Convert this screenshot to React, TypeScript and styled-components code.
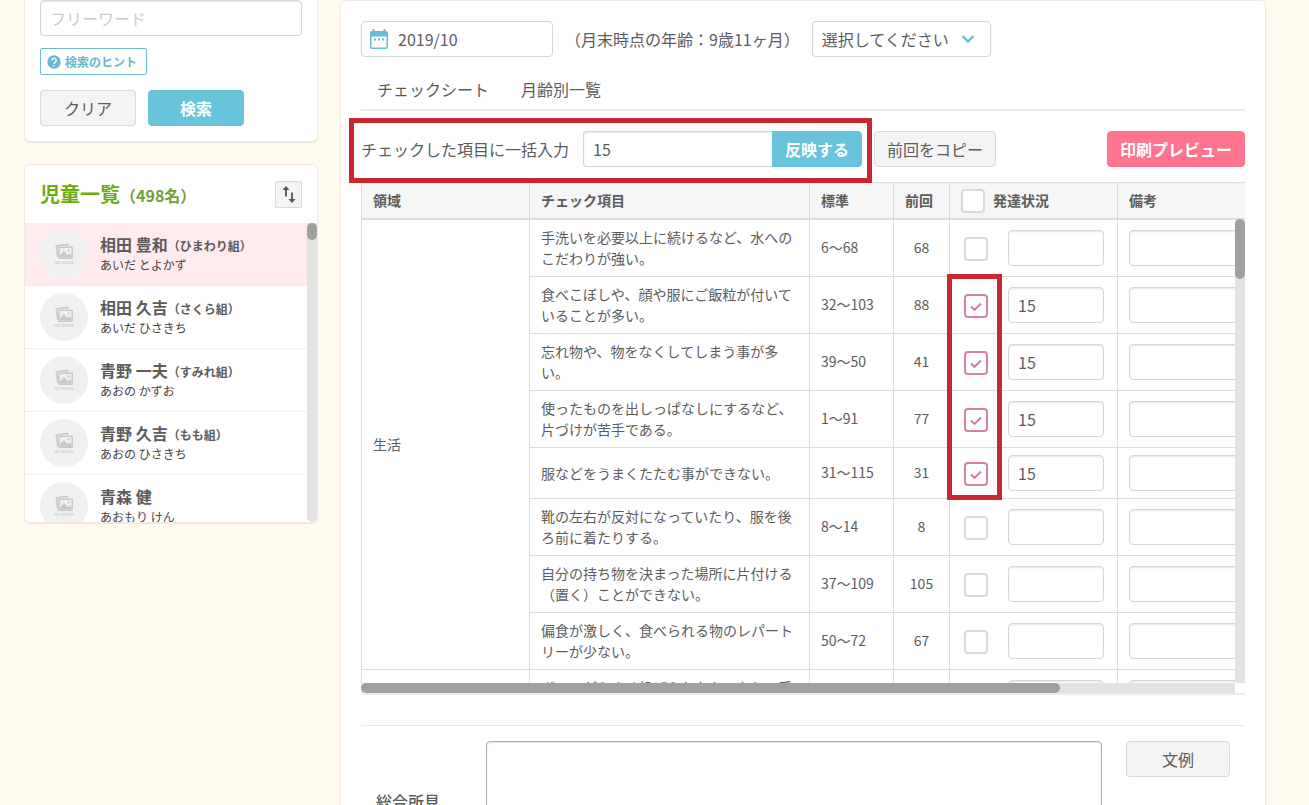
import React from 'react';
import styled, { createGlobalStyle, css } from 'styled-components';

const GlobalStyle = createGlobalStyle`
  *, *::before, *::after { box-sizing: border-box; }
  body {
    margin: 0;
    background: #fffbee;
    color: #5c5c5c;
    font: 400 16px/24px "Noto Sans CJK JP", "Noto Sans", sans-serif;
  }
  button, input, select, textarea { font: inherit; color: inherit; margin: 0; }
`;

const Page = styled.div`
  display: flex;
  align-items: flex-start;
  gap: 22px;
  height: 100vh;
  padding: 0 43px 0 24px;
  overflow: hidden;
`;

const Sidebar = styled.aside`
  flex: 0 0 294px;
  display: flex;
  flex-direction: column;
  gap: 22px;
`;

const cardBase = css`
  background: #fff;
  border: 1px solid #f1ebdf;
  border-radius: 6px;
  box-shadow: 0 1px 1px #ece6da;
`;

const SearchCard = styled.form`
  ${cardBase}
  display: flex;
  flex-direction: column;
  align-items: flex-start;
  gap: 12px;
  padding: 0 15px 15px;
  border-top: 0;
  border-radius: 0 0 6px 6px;
`;

const TextField = styled.input`
  display: block;
  width: 100%;
  min-width: 0;
  height: 36px;
  padding: 0 9px;
  border: 1px solid #d6d6d6;
  border-radius: 4px;
  background: #fff;
  box-shadow: inset 0 1px 2px rgba(0, 0, 0, 0.1);
  outline: none;
  &::placeholder { color: #cbcbcb; opacity: 1; }
`;

const HintButton = styled.button`
  display: flex;
  align-items: center;
  gap: 4px;
  height: 27px;
  padding: 0 9px 0 6px;
  border: 1px solid #6db9ce;
  border-radius: 2px;
  background: #fff;
  color: #6ab8ce;
  font-size: 12px;
  font-weight: 700;
  line-height: 18px;
`;

const ButtonRow = styled.div`
  display: flex;
  gap: 12px;
  padding-top: 3px;
`;

type Tone = 'plain' | 'blue' | 'pink';
const tones = {
  plain: css`background: #f4f4f4; border: 1px solid #d9d9d9; color: #5c5c5c; font-weight: 400;`,
  blue: css`background: #67c4dc; border: 1px solid #67c4dc; color: #fff; font-weight: 700;`,
  pink: css`background: #ff738c; border: 1px solid #ff738c; color: #fff; font-weight: 700;`,
};

const Button = styled.button<{ $tone?: Tone; $width?: number; $joined?: boolean }>`
  flex: none;
  height: 36px;
  padding: 0 12px;
  border-radius: ${(p) => (p.$joined ? '0 4px 4px 0' : '4px')};
  ${(p) => tones[p.$tone ?? 'plain']}
  ${(p) => p.$width && `width: ${p.$width}px;`}
`;

const ListCard = styled.section`
  ${cardBase}
  overflow: hidden;
`;

const ListHeader = styled.header`
  display: flex;
  align-items: center;
  justify-content: space-between;
  height: 58px;
  padding: 0 15px;
`;

const ListTitle = styled.h2`
  margin: 0;
  color: #6cab11;
  font-size: 20px;
  font-weight: 700;
  line-height: 30px;
`;

const Count = styled.span`
  color: #6f9f3a;
  font-size: 16px;
`;

const SortButton = styled.button`
  display: flex;
  align-items: center;
  justify-content: center;
  width: 27px;
  height: 27px;
  padding: 0;
  border: 1px solid #d9d9d9;
  border-radius: 2px;
  background: #f4f4f4;
`;

const ListBody = styled.div`
  display: flex;
  height: 299px;
`;

const Children = styled.ul`
  flex: 1;
  margin: 0;
  padding: 0;
  list-style: none;
  overflow: hidden;
`;

const Child = styled.li<{ $active?: boolean }>`
  display: flex;
  align-items: center;
  gap: 12px;
  height: 63px;
  padding: 0 15px;
  border-bottom: 1px solid ${(p) => (p.$active ? '#ffeaed' : '#f0f0f0')};
  background: ${(p) => (p.$active ? '#ffeaed' : '#fff')};
`;

const ChildText = styled.div`
  padding-bottom: 2px;
`;

const Name = styled.div`
  font-weight: 700;
  line-height: 22px;
  white-space: nowrap;
`;

const ClassName = styled.span`
  font-size: 12px;
`;

const Kana = styled.div`
  color: #444;
  font-size: 12px;
  line-height: 16px;
`;

const Track = styled.div<{ $axis: 'x' | 'y' }>`
  flex: none;
  background: #e3e3e3;
  ${(p) => (p.$axis === 'y' ? 'width: 10px; border-radius: 0 0 5px 5px;' : 'height: 10px; margin-right: 10px;')}
`;

const Thumb = styled.div<{ $axis: 'x' | 'y'; $size: string }>`
  border-radius: 5px;
  background: #a0a0a0;
  ${(p) => (p.$axis === 'y' ? `height: ${p.$size};` : `width: ${p.$size}; height: 10px;`)}
`;

const Main = styled.main`
  ${cardBase}
  flex: 1;
  min-width: 0;
  padding: 20px;
`;

const FilterRow = styled.div`
  display: flex;
  align-items: center;
  gap: 12px;
`;

const DateBox = styled.label`
  display: flex;
  align-items: center;
  gap: 9px;
  width: 192px;
  height: 36px;
  padding: 0 7px;
  border: 1px solid #d6d6d6;
  border-radius: 4px;
`;

const DateInput = styled.input`
  flex: 1;
  min-width: 0;
  padding: 0;
  border: 0;
  background: none;
  outline: none;
`;

const SelectBox = styled.div`
  position: relative;
`;

const Select = styled.select`
  display: block;
  width: 179px;
  height: 36px;
  padding: 0 9px;
  border: 1px solid #d6d6d6;
  border-radius: 4px;
  background: #fff;
  appearance: none;
`;

const SelectArrow = styled.svg`
  position: absolute;
  top: 13px;
  right: 16px;
  pointer-events: none;
`;

const Tabs = styled.nav`
  display: flex;
  margin-top: 14px;
  border-bottom: 2px solid #ebebeb;
`;

const Tab = styled.a`
  padding: 6px 16px 8px;
  color: inherit;
  text-decoration: none;
`;

const Toolbar = styled.div`
  display: flex;
  gap: 12px;
  margin: 20px 0 15px;
`;

const outline = css`
  border: 5px solid #cb2730;
  pointer-events: none;
`;

const BulkInput = styled.div`
  position: relative;
  display: flex;
  align-items: center;
  &::after {
    content: '';
    position: absolute;
    inset: -13px -10px -16px -12px;
    z-index: 2;
    ${outline}
  }
`;

const BulkLabel = styled.label`
  margin-right: 14px;
  white-space: nowrap;
`;

const BulkField = styled(TextField)`
  width: 189px;
  border-right: 0;
  border-radius: 4px 0 0 4px;
`;

const Spacer = styled.div`
  flex: 1;
`;

const TableFrame = styled.div`
  position: relative;
  border-bottom: 2px solid #ececec;
`;

const TableScroll = styled.div`
  height: 501px;
  overflow: hidden;
`;

const SideBar = styled.div`
  position: absolute;
  top: 37px;
  right: 0;
  bottom: 10px;
  display: flex;
  background: #e3e3e3;
`;

const CheckHighlight = styled.div`
  position: absolute;
  top: 92px;
  left: 586px;
  width: 55px;
  height: 226px;
  z-index: 2;
  ${outline}
`;

const Table = styled.table`
  table-layout: fixed;
  width: 1105px;
  border-spacing: 0;
  font-size: 14px;
  line-height: 21px;
`;

const Th = styled.th`
  height: 38px;
  padding: 0 11px;
  border-top: 1px solid #dcdcdc;
  border-left: 1px solid #dcdcdc;
  border-bottom: 2px solid #dcdcdc;
  background: #f6f6f6;
  text-align: left;
  font-weight: 700;
`;

const Td = styled.td`
  padding: 7px 11px;
  border-left: 1px solid #dcdcdc;
  border-bottom: 1px solid #dcdcdc;
`;

const NumberTd = styled(Td)<{ $center?: boolean }>`
  padding: 6px 11px 8px;
  text-align: ${(p) => (p.$center ? 'center' : 'left')};
`;

const HeadCheck = styled.label`
  display: flex;
  align-items: center;
  gap: 8px;
`;

const StatusCell = styled.div`
  display: flex;
  align-items: center;
  gap: 20px;
  padding: 0 2px 0 3px;
  font-size: 16px;
`;

const CheckWrap = styled.span`
  position: relative;
  flex: none;
  display: block;
  width: 24px;
  height: 24px;
  svg { position: absolute; top: 6px; left: 5px; pointer-events: none; }
`;

const RowCheck = styled(CheckWrap)`
  margin-top: 2px;
`;

const CheckInput = styled.input`
  display: block;
  appearance: none;
  width: 24px;
  height: 24px;
  border: 2px solid #dadada;
  border-radius: 4px;
  background: #fff;
  &:checked { border-color: #d5849a; }
`;

const Remark = styled(TextField)`
  font-size: 16px;
`;

const Findings = styled.section`
  display: flex;
  align-items: center;
  margin-top: 30px;
  padding: 15px 15px 0;
  border-top: 1px solid #e8e8e8;
`;

const FindingsLabel = styled.label`
  flex: 0 0 110px;
  font-weight: 500;
`;

const FindingsText = styled.textarea`
  flex: 1;
  min-width: 0;
  height: 120px;
  margin-right: 24px;
  border: 1px solid #adadad;
  border-radius: 4px;
  box-shadow: inset 0 1px 2px rgba(0, 0, 0, 0.1);
  resize: none;
`;

const FindingsAction = styled.div`
  align-self: flex-start;
`;

const children = [
  { name: '相田 豊和', group: '（ひまわり組）', kana: 'あいだ とよかず' },
  { name: '相田 久吉', group: '（さくら組）', kana: 'あいだ ひさきち' },
  { name: '青野 一夫', group: '（すみれ組）', kana: 'あおの かずお' },
  { name: '青野 久吉', group: '（もも組）', kana: 'あおの ひさきち' },
  { name: '青森 健', group: '', kana: 'あおもり けん' },
];

type Item = { text: string; range: string; last: string; checked?: boolean };
const areas: { area: string; items: Item[] }[] = [
  {
    area: '生活',
    items: [
      { text: '手洗いを必要以上に続けるなど、水へのこだわりが強い。', range: '6〜68', last: '68' },
      { text: '食べこぼしや、顔や服にご飯粒が付いていることが多い。', range: '32〜103', last: '88', checked: true },
      { text: '忘れ物や、物をなくしてしまう事が多い。', range: '39〜50', last: '41', checked: true },
      { text: '使ったものを出しっぱなしにするなど、片づけが苦手である。', range: '1〜91', last: '77', checked: true },
      { text: '服などをうまくたたむ事ができない。', range: '31〜115', last: '31', checked: true },
      { text: '靴の左右が反対になっていたり、服を後ろ前に着たりする。', range: '8〜14', last: '8' },
      { text: '自分の持ち物を決まった場所に片付ける（置く）ことができない。', range: '37〜109', last: '105' },
      { text: '偏食が激しく、食べられる物のレパートリーが少ない。', range: '50〜72', last: '67' },
    ],
  },
  {
    area: '運動',
    items: [{ text: 'ボールがうまく投げられなかったり、受け取れなかったりする。', range: '12〜60', last: '40' }],
  },
];

const Avatar = () => (
  <svg width="48" height="48" viewBox="0 0 48 48" aria-hidden="true">
    <circle cx="24" cy="24" r="24" fill="#f0f0f0" />
    <path d="M27.500 16v-1.600L16.300 15.800l1.400 10.400h1" fill="none" stroke="#c8c8c8" strokeWidth="1.500" />
    <rect x="19" y="17.300" width="13.200" height="10.900" rx="0.500" fill="#f0f0f0" stroke="#c8c8c8" strokeWidth="1.500" />
    <path d="M20 27.500v-2l4-4.500 3.500 4 2-1.500 2 2v2z" fill="#c8c8c8" />
    <circle cx="28.600" cy="20.300" r="1.100" fill="#c8c8c8" />
    <text x="24" y="34" textAnchor="middle" fontSize="4" fontWeight="700" fill="#d0d0d0">NO IMAGE</text>
  </svg>
);

const CheckBox = ({ label, checked, Wrap = CheckWrap }: { label: string; checked?: boolean; Wrap?: typeof CheckWrap }) => (
  <Wrap>
    <CheckInput type="checkbox" aria-label={label} defaultChecked={checked} />
    {checked && (
      <svg width="14" height="13" viewBox="0 0 14 13" aria-hidden="true">
        <path d="M2 6.500 5.500 10 12 3.500" fill="none" stroke="#d5788f" strokeWidth="1.800" />
      </svg>
    )}
  </Wrap>
);

export default function App() {
  return (
    <Page>
      <GlobalStyle />
      <Sidebar>
        <SearchCard>
          <TextField type="text" placeholder="フリーワード" aria-label="フリーワード" />
          <HintButton type="button">
            <svg width="14" height="14" viewBox="0 0 14 14" aria-hidden="true">
              <circle cx="7" cy="7" r="6.700" fill="#6ab8ce" />
              <path d="M4.800 5.500a2.200 2.200 0 1 1 3.500 1.700C7.500 7.800 7 8.100 7 9" fill="none" stroke="#fff" strokeWidth="1.400" />
              <rect x="6.300" y="10" width="1.400" height="1.400" fill="#fff" />
            </svg>
            検索のヒント
          </HintButton>
          <ButtonRow>
            <Button type="reset" $width={96}>クリア</Button>
            <Button type="button" $tone="blue" $width={96}>検索</Button>
          </ButtonRow>
        </SearchCard>

        <ListCard>
          <ListHeader>
            <ListTitle>児童一覧<Count>（498名）</Count></ListTitle>
            <SortButton type="button" aria-label="並び替え">
              <svg width="16" height="19" viewBox="0 0 16 19" aria-hidden="true">
                <path d="M5 11.500V3.500M11 7.500v8" fill="none" stroke="#555" strokeWidth="1.800" />
                <path d="M5 1l3.500 4h-7zM11 18l3.500-4h-7z" fill="#555" />
              </svg>
            </SortButton>
          </ListHeader>
          <ListBody>
            <Children>
              {children.map((c, i) => (
                <Child key={c.kana} $active={i === 0}>
                  <Avatar />
                  <ChildText>
                    <Name>{c.name}<ClassName>{c.group}</ClassName></Name>
                    <Kana>{c.kana}</Kana>
                  </ChildText>
                </Child>
              ))}
            </Children>
            <Track $axis="y"><Thumb $axis="y" $size="17px" /></Track>
          </ListBody>
        </ListCard>
      </Sidebar>

      <Main>
        <FilterRow>
          <DateBox>
            <svg width="20" height="22" viewBox="0 0 20 22" aria-hidden="true">
              <path d="M3 3h14a2 2 0 0 1 2 2v14a2 2 0 0 1-2 2H3a2 2 0 0 1-2-2V5a2 2 0 0 1 2-2zm-.500 5.500V19.500h15V8.500z" fill="#67bdd3" fillRule="evenodd" />
              <path d="M4.500 1v3M15.500 1v3" stroke="#67bdd3" strokeWidth="2" />
              <path d="M5 11.500h2M9 11.500h2M13 11.500h2" stroke="#67bdd3" strokeWidth="2" />
            </svg>
            <DateInput type="text" defaultValue="2019/10" aria-label="年月" />
          </DateBox>
          <span>（月末時点の年齢：9歳11ヶ月）</span>
          <SelectBox>
            <Select aria-label="選択"><option>選択してください</option></Select>
            <SelectArrow width="14" height="10" viewBox="0 0 14 10" aria-hidden="true">
              <path d="M1.500 2 7 7.500 12.500 2" fill="none" stroke="#67bdd3" strokeWidth="2.400" />
            </SelectArrow>
          </SelectBox>
        </FilterRow>

        <Tabs>
          <Tab href="#sheet">チェックシート</Tab>
          <Tab href="#monthly">月齢別一覧</Tab>
        </Tabs>

        <Toolbar>
          <BulkInput>
            <BulkLabel htmlFor="bulk">チェックした項目に一括入力</BulkLabel>
            <BulkField id="bulk" type="text" defaultValue="15" />
            <Button type="button" $tone="blue" $width={90} $joined>反映する</Button>
          </BulkInput>
          <Button type="button" $width={122}>前回をコピー</Button>
          <Spacer />
          <Button type="button" $tone="pink" $width={138}>印刷プレビュー</Button>
        </Toolbar>

        <TableFrame>
          <TableScroll>
            <Table>
              <colgroup>
                <col width="168" />
                <col width="280" />
                <col width="84" />
                <col width="56" />
                <col width="168" />
                <col />
              </colgroup>
              <thead>
                <tr>
                  <Th>領域</Th>
                  <Th>チェック項目</Th>
                  <Th>標準</Th>
                  <Th>前回</Th>
                  <Th><HeadCheck><CheckBox label="すべて選択" />発達状況</HeadCheck></Th>
                  <Th>備考</Th>
                </tr>
              </thead>
              <tbody>
                {areas.map(({ area, items }) =>
                  items.map((item, i) => (
                    <tr key={item.text}>
                      {i === 0 && <Td rowSpan={items.length}>{area}</Td>}
                      <Td>{item.text}</Td>
                      <NumberTd>{item.range}</NumberTd>
                      <NumberTd $center>{item.last}</NumberTd>
                      <Td>
                        <StatusCell>
                          <CheckBox Wrap={RowCheck} label={item.text} checked={item.checked} />
                          <TextField type="text" aria-label="発達状況" defaultValue={item.checked ? '15' : ''} />
                        </StatusCell>
                      </Td>
                      <Td><Remark type="text" aria-label="備考" /></Td>
                    </tr>
                  )),
                )}
              </tbody>
            </Table>
          </TableScroll>
          <SideBar><Track $axis="y"><Thumb $axis="y" $size="60px" /></Track></SideBar>
          <Track $axis="x"><Thumb $axis="x" $size="80%" /></Track>
          <CheckHighlight />
        </TableFrame>

        <Findings>
          <FindingsLabel htmlFor="findings">総合所見</FindingsLabel>
          <FindingsText id="findings" />
          <FindingsAction><Button type="button" $width={104}>文例</Button></FindingsAction>
        </Findings>
      </Main>
    </Page>
  );
}
